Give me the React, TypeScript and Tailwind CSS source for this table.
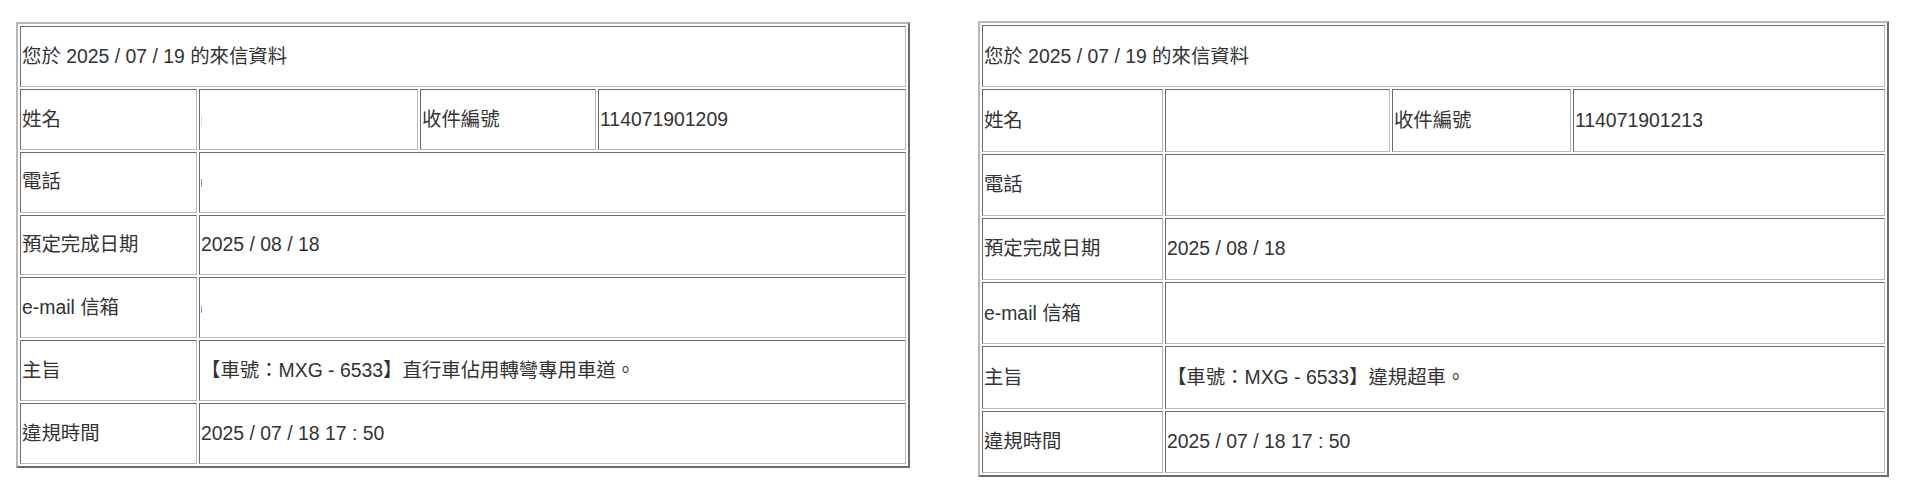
import type { ReactNode } from 'react'

type Letter = {
  serial: string
  subject: string
  cols: [number, number, number, number]
  width: number
  height: number
  marks: boolean
}

// two letters shown side by side, sizes read off the screenshot
const letters: Letter[] = [
  {
    serial: '114071901209',
    subject: '【車號：MXG - 6533】直行車佔用轉彎專用車道。',
    cols: [177, 219, 176, 308],
    width: 894,
    height: 446,
    marks: true,
  },
  {
    serial: '114071901213',
    subject: '【車號：MXG - 6533】違規超車。',
    cols: [181, 225, 179, 312],
    width: 911,
    height: 456,
    marks: false,
  },
]

function Cell({ children, span }: { children?: ReactNode; span?: number }) {
  return (
    <td
      colSpan={span}
      className="border-[1.5px] border-t-[#6b6b6b] border-l-[#6b6b6b] border-r-[#b9b9b9] border-b-[#b9b9b9] p-[1px] align-middle whitespace-nowrap overflow-hidden"
    >
      {children}
    </td>
  )
}

function LetterTable({ data }: { data: Letter }) {
  return (
    <table
      style={{ width: data.width, height: data.height }}
      className="border-separate border-spacing-[2px] border-2 border-t-[#b9b9b9] border-l-[#b9b9b9] border-r-[#6b6b6b] border-b-[#6b6b6b] table-fixed"
    >
      <colgroup>
        {data.cols.map((w, i) => (
          <col key={i} style={{ width: w }} />
        ))}
      </colgroup>
      <tbody>
        <tr>
          <Cell span={4}>您於 2025 / 07 / 19 的來信資料</Cell>
        </tr>
        <tr>
          <Cell>姓名</Cell>
          <Cell>
            {data.marks && <span className="inline-block w-[1px] h-[10px] bg-[#dcdcdc] align-middle" />}
          </Cell>
          <Cell>收件編號</Cell>
          <Cell>{data.serial}</Cell>
        </tr>
        <tr>
          <Cell>電話</Cell>
          <Cell span={3}>
            {data.marks && <span className="inline-block w-[1px] h-[8px] bg-[#9a9a9a] align-middle" />}
          </Cell>
        </tr>
        <tr>
          <Cell>預定完成日期</Cell>
          <Cell span={3}>2025 / 08 / 18</Cell>
        </tr>
        <tr>
          <Cell>e-mail 信箱</Cell>
          <Cell span={3}>
            {data.marks && <span className="inline-block w-[1px] h-[7px] bg-[#7c9cf0] align-middle" />}
          </Cell>
        </tr>
        <tr>
          <Cell>主旨</Cell>
          <Cell span={3}>{data.subject}</Cell>
        </tr>
        <tr>
          <Cell>違規時間</Cell>
          <Cell span={3}>2025 / 07 / 18 17 : 50</Cell>
        </tr>
      </tbody>
    </table>
  )
}

export default function App() {
  return (
    <div className="w-[1906px] h-[500px] bg-white text-[#333] text-[19.4px] leading-[1.2] font-['Liberation_Sans','Noto_Sans_CJK_TC',sans-serif]">
      <div className="flex items-start justify-between pl-[16px] pr-[17px] pt-[21px]">
        <div className="mt-[1px]">
          <LetterTable data={letters[0]} />
        </div>
        <LetterTable data={letters[1]} />
      </div>
    </div>
  )
}
